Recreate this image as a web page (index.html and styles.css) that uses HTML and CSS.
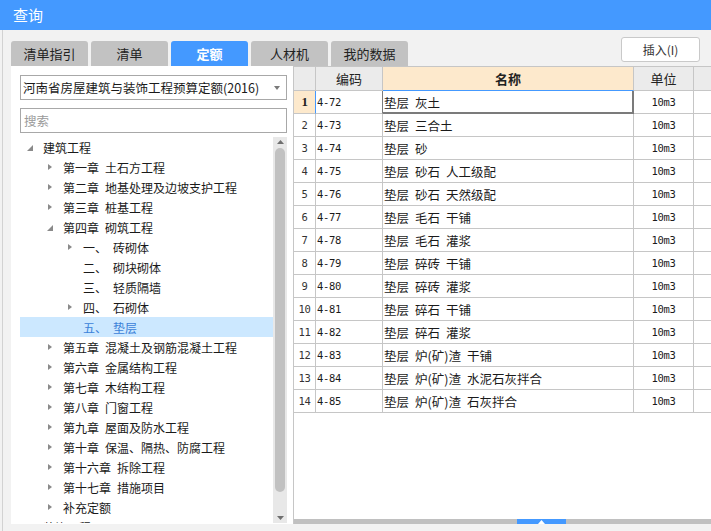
FILE: index.html
```html
<!DOCTYPE html>
<html lang="zh-CN">
<head>
<meta charset="utf-8">
<title>查询</title>
<link rel="stylesheet" href="styles.css">
</head>
<body>
<div class="titlebar">查询</div>
<div class="main">
  <div class="toolbar">
    <div class="tabs">
      <div class="tab">清单指引</div>
      <div class="tab">清单</div>
      <div class="tab active">定额</div>
      <div class="tab">人材机</div>
      <div class="tab">我的数据</div>
    </div>
    <div class="btn">插入(I)</div>
  </div>
  <div class="content">
    <div class="left">
      <div class="select">
        <span class="seltext">河南省房屋建筑与装饰工程预算定额(2016)</span>
        <svg class="caret" width="6" height="4" viewBox="0 0 6 4"><path d="M0 0H6L3 4Z" fill="#7a7a7a"/></svg>
      </div>
      <div class="search">搜索</div>
      <div class="treewrap">
        <div class="tree">
          <div class="row"><span class="exp"><i class="open"></i></span><span class="lbl">建筑工程</span></div>
          <div class="row l1"><span class="exp"><i class="closed"></i></span><span class="lbl">第一章<span class="g"> </span>土石方工程</span></div>
          <div class="row l1"><span class="exp"><i class="closed"></i></span><span class="lbl">第二章<span class="g"> </span>地基处理及边坡支护工程</span></div>
          <div class="row l1"><span class="exp"><i class="closed"></i></span><span class="lbl">第三章<span class="g"> </span>桩基工程</span></div>
          <div class="row l1"><span class="exp"><i class="open"></i></span><span class="lbl">第四章<span class="g"> </span>砌筑工程</span></div>
          <div class="row l2"><span class="exp"><i class="closed"></i></span><span class="lbl">一、<span class="g"> </span>砖砌体</span></div>
          <div class="row l2"><span class="exp"></span><span class="lbl">二、<span class="g"> </span>砌块砌体</span></div>
          <div class="row l2"><span class="exp"></span><span class="lbl">三、<span class="g"> </span>轻质隔墙</span></div>
          <div class="row l2"><span class="exp"><i class="closed"></i></span><span class="lbl">四、<span class="g"> </span>石砌体</span></div>
          <div class="row l2 sel"><span class="exp"></span><span class="lbl">五、<span class="g"> </span>垫层</span></div>
          <div class="row l1"><span class="exp"><i class="closed"></i></span><span class="lbl">第五章<span class="g"> </span>混凝土及钢筋混凝土工程</span></div>
          <div class="row l1"><span class="exp"><i class="closed"></i></span><span class="lbl">第六章<span class="g"> </span>金属结构工程</span></div>
          <div class="row l1"><span class="exp"><i class="closed"></i></span><span class="lbl">第七章<span class="g"> </span>木结构工程</span></div>
          <div class="row l1"><span class="exp"><i class="closed"></i></span><span class="lbl">第八章<span class="g"> </span>门窗工程</span></div>
          <div class="row l1"><span class="exp"><i class="closed"></i></span><span class="lbl">第九章<span class="g"> </span>屋面及防水工程</span></div>
          <div class="row l1"><span class="exp"><i class="closed"></i></span><span class="lbl">第十章<span class="g"> </span>保温、隔热、防腐工程</span></div>
          <div class="row l1"><span class="exp"><i class="closed"></i></span><span class="lbl">第十六章<span class="g"> </span>拆除工程</span></div>
          <div class="row l1"><span class="exp"><i class="closed"></i></span><span class="lbl">第十七章<span class="g"> </span>措施项目</span></div>
          <div class="row l1"><span class="exp"><i class="closed"></i></span><span class="lbl">补充定额</span></div>
          <div class="row"><span class="exp"><i class="closed"></i></span><span class="lbl">装饰工程</span></div>
        </div>
        <div class="vscroll">
          <svg class="arrow up" width="7" height="4" viewBox="0 0 7 4"><path d="M0 4H7L3.5 0Z" fill="#6f6f6f"/></svg>
          <div class="thumb"></div>
          <svg class="arrow down" width="7" height="4" viewBox="0 0 7 4"><path d="M0 0H7L3.5 4Z" fill="#6f6f6f"/></svg>
        </div>
      </div>
    </div>
    <div class="grid">
      <div class="hdr">
        <div class="c"></div>
        <div class="c">编码</div>
        <div class="c name">名称</div>
        <div class="c">单位</div>
        <div class="c"></div>
      </div>
      <div class="tr first">
        <div class="c no">1</div>
        <div class="c code">4-72</div>
        <div class="c nm cur">垫层<span class="g"> </span>灰土</div>
        <div class="c unit">10m3</div>
        <div class="c"></div>
      </div>
      <div class="tr"><div class="c no">2</div><div class="c code">4-73</div><div class="c nm">垫层<span class="g"> </span>三合土</div><div class="c unit">10m3</div><div class="c"></div></div>
      <div class="tr"><div class="c no">3</div><div class="c code">4-74</div><div class="c nm">垫层<span class="g"> </span>砂</div><div class="c unit">10m3</div><div class="c"></div></div>
      <div class="tr"><div class="c no">4</div><div class="c code">4-75</div><div class="c nm">垫层<span class="g"> </span>砂石<span class="g"> </span>人工级配</div><div class="c unit">10m3</div><div class="c"></div></div>
      <div class="tr"><div class="c no">5</div><div class="c code">4-76</div><div class="c nm">垫层<span class="g"> </span>砂石<span class="g"> </span>天然级配</div><div class="c unit">10m3</div><div class="c"></div></div>
      <div class="tr"><div class="c no">6</div><div class="c code">4-77</div><div class="c nm">垫层<span class="g"> </span>毛石<span class="g"> </span>干铺</div><div class="c unit">10m3</div><div class="c"></div></div>
      <div class="tr"><div class="c no">7</div><div class="c code">4-78</div><div class="c nm">垫层<span class="g"> </span>毛石<span class="g"> </span>灌浆</div><div class="c unit">10m3</div><div class="c"></div></div>
      <div class="tr"><div class="c no">8</div><div class="c code">4-79</div><div class="c nm">垫层<span class="g"> </span>碎砖<span class="g"> </span>干铺</div><div class="c unit">10m3</div><div class="c"></div></div>
      <div class="tr"><div class="c no">9</div><div class="c code">4-80</div><div class="c nm">垫层<span class="g"> </span>碎砖<span class="g"> </span>灌浆</div><div class="c unit">10m3</div><div class="c"></div></div>
      <div class="tr"><div class="c no">10</div><div class="c code">4-81</div><div class="c nm">垫层<span class="g"> </span>碎石<span class="g"> </span>干铺</div><div class="c unit">10m3</div><div class="c"></div></div>
      <div class="tr"><div class="c no">11</div><div class="c code">4-82</div><div class="c nm">垫层<span class="g"> </span>碎石<span class="g"> </span>灌浆</div><div class="c unit">10m3</div><div class="c"></div></div>
      <div class="tr"><div class="c no">12</div><div class="c code">4-83</div><div class="c nm">垫层<span class="g"> </span>炉(矿)渣<span class="g"> </span>干铺</div><div class="c unit">10m3</div><div class="c"></div></div>
      <div class="tr"><div class="c no">13</div><div class="c code">4-84</div><div class="c nm">垫层<span class="g"> </span>炉(矿)渣<span class="g"> </span>水泥石灰拌合</div><div class="c unit">10m3</div><div class="c"></div></div>
      <div class="tr"><div class="c no">14</div><div class="c code">4-85</div><div class="c nm">垫层<span class="g"> </span>炉(矿)渣<span class="g"> </span>石灰拌合</div><div class="c unit">10m3</div><div class="c"></div></div>
      <div class="spacer"></div>
      <div class="hscroll">
        <div class="hthumb"><svg width="7" height="4" viewBox="0 0 7 4"><path d="M0 4H7L3.5 0Z" fill="#ffffff"/></svg></div>
      </div>
    </div>
  </div>
</div>
</body>
</html>
```
FILE: styles.css
```css
* { box-sizing: border-box; margin: 0; padding: 0; }
html, body { width: 711px; height: 531px; overflow: hidden; }
body {
  background: #f2f2f2;
  font-family: "Noto Sans CJK SC", "Noto Sans", sans-serif;
  font-size: 12px;
  color: #1a1a1a;
}
.titlebar {
  height: 30px;
  background: #4499ff;
  color: #fff;
  font-size: 15px;
  line-height: 30px;
  padding-left: 13px;
}
.main {
  margin-left: 2px;
  border-left: 1px solid #d2d2d2;
  height: 501px;
  padding-left: 8px;
  display: flex;
  flex-direction: column;
}
.toolbar { height: 36px; display: flex; flex: none; }
.tabs { display: flex; gap: 3px; align-self: flex-end; }
.tab {
  width: 77px;
  height: 25px;
  background: #c2c2c2;
  border-radius: 3px 3px 0 0;
  text-align: center;
  line-height: 25px;
  font-size: 13px;
  color: #222;
}
.tab.active { background: #4499ff; color: #fff; font-weight: bold; }
.btn {
  margin-left: auto;
  margin-top: 7px;
  margin-right: 11px;
  width: 79px;
  height: 25px;
  border: 1px solid #c9c9c9;
  border-radius: 3px;
  background: #fff;
  font-size: 12px;
  line-height: 23px;
  text-align: center;
  color: #333;
}
.content { display: flex; height: 458px; flex: none; }
.left {
  width: 282px;
  flex: none;
  background: #fff;
  padding: 9px 6px 0 9px;
  display: flex;
  flex-direction: column;
}
.select {
  height: 25px;
  border: 1px solid #a8a8a8;
  display: flex;
  align-items: center;
  padding-left: 2px;
  padding-right: 6px;
  white-space: nowrap;
}
.seltext { flex: 1; font-size: 12.5px; }
.caret { flex: none; }
.search {
  margin-top: 8px;
  height: 25px;
  border: 1px solid #a8a8a8;
  color: #9a9a9a;
  padding-left: 3px;
  line-height: 23px;
  font-size: 12.5px;
}
.treewrap { margin-top: 4px; height: 386px; display: flex; overflow: hidden; }
.tree { flex: 1; overflow: hidden; }
.row { height: 20px; display: flex; align-items: center; white-space: nowrap; }
.l1 { padding-left: 20px; }
.l2 { padding-left: 40px; }
.exp { width: 20px; height: 20px; flex: none; display: flex; justify-content: center; align-items: center; }
.lbl { margin-left: 3px; }
.g { display: inline-block; width: 6px; }
.sel { background: #cce8ff; color: #3b82d9; }
.closed {
  display: block;
  width: 0; height: 0;
  border-top: 3.5px solid transparent;
  border-bottom: 3.5px solid transparent;
  border-left: 4px solid #8a8a8a;
}
.open {
  display: block;
  width: 0; height: 0;
  border-left: 6px solid transparent;
  border-bottom: 6px solid #8a8a8a;
  margin-top: 1px;
}
.vscroll {
  width: 14px;
  flex: none;
  background: #e8e8e8;
  display: flex;
  flex-direction: column;
  align-items: center;
  padding-top: 3px;
}
.arrow { display: block; flex: none; }
.thumb {
  width: 10px;
  height: 344px;
  margin-top: 4px;
  background: #c1c1c1;
  border-radius: 5px;
}
.arrow.down { margin-top: 24px; }
.grid {
  flex: 1;
  min-width: 0;
  background: #fff;
  border-left: 1px solid #c6c6c6;
  border-top: 1px solid #c6c6c6;
  display: flex;
  flex-direction: column;
  overflow: hidden;
}
.hdr, .tr {
  display: grid;
  grid-template-columns: 22px 67px 251px 60px 60px;
  flex: none;
}
.c {
  border-right: 1px solid #c6c6c6;
  border-bottom: 1px solid #c6c6c6;
  white-space: nowrap;
  overflow: hidden;
  display: flex;
  align-items: center;
}
.hdr .c { height: 24px; background: #ebebeb; justify-content: center; font-size: 13px; color: #222; }
.hdr .c.name { background: #fde9cc; font-weight: bold; border-bottom-color: #4499ff; }
.tr .c { height: 23px; }
.no {
  justify-content: center;
  font-family: "DejaVu Sans Mono", monospace;
  font-size: 10.5px;
  color: #333;
  letter-spacing: -0.4px;
}
.code {
  padding-left: 1px;
  font-family: "DejaVu Sans Mono", monospace;
  font-size: 10.5px;
  letter-spacing: -0.3px;
}
.unit {
  justify-content: center;
  font-family: "DejaVu Sans Mono", monospace;
  font-size: 10.5px;
  letter-spacing: -0.3px;
}
.nm { padding-left: 1px; font-size: 12.5px; }
.first .no {
  background: #fde9cc;
  border-right-color: #4499ff;
  font-family: "Liberation Serif", serif;
  font-weight: bold;
  font-size: 13px;
  color: #222;
}
.first .code { border-right-color: #7b7b7b; }
.cur {
  border-right-color: #7b7b7b;
  border-bottom-color: #7b7b7b;
  box-shadow: inset -1px -1px 0 #7b7b7b;
}
.spacer { flex: 1; }
.hscroll { height: 5px; flex: none; background: #c0c0c0; display: flex; }
.hthumb {
  margin-left: 223px;
  width: 49px;
  height: 5px;
  background: #4499ff;
  display: flex;
  justify-content: center;
  align-items: center;
}
.hthumb svg { display: block; }
```
